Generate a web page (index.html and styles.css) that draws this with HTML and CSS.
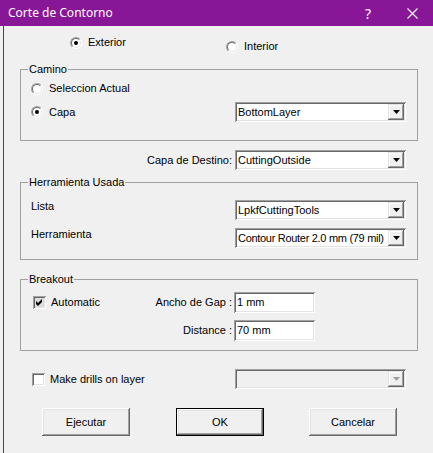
FILE: index.html
```html
<!DOCTYPE html>
<html>
<head>
<meta charset="utf-8">
<title>Corte de Contorno</title>
<link rel="stylesheet" href="styles.css">
</head>
<body>
<div class="window">
  <div class="titlebar">
    <span class="title">Corte de Contorno</span>
    <span class="tb-btn help">?</span>
    <span class="tb-btn close">
      <svg width="11" height="11" viewBox="0 0 11 11"><path d="M0.5 0.5 L10.5 10.5 M10.5 0.5 L0.5 10.5" stroke="#fff" stroke-width="1.1" fill="none"/></svg>
    </span>
  </div>
  <div class="client">
    <div class="mode-row">
      <div class="opt opt-ext"><span class="radio on"></span><span>Exterior</span></div>
      <div class="opt opt-int"><span class="radio"></span><span>Interior</span></div>
    </div>

    <fieldset class="group g-camino">
      <legend>Camino</legend>
      <div class="opt sel-row"><span class="radio"></span><span>Seleccion Actual</span></div>
      <div class="capa-row">
        <div class="opt"><span class="radio on"></span><span>Capa</span></div>
        <div class="combo push">
          <span class="combo-text">BottomLayer</span>
          <span class="combo-btn"><svg width="7" height="4" viewBox="0 0 7 4"><polygon points="0,0 7,0 3.5,4" fill="#000"/></svg></span>
        </div>
      </div>
    </fieldset>

    <div class="dest-row">
      <span>Capa de Destino:</span>
      <div class="combo">
        <span class="combo-text">CuttingOutside</span>
        <span class="combo-btn"><svg width="7" height="4" viewBox="0 0 7 4"><polygon points="0,0 7,0 3.5,4" fill="#000"/></svg></span>
      </div>
    </div>

    <fieldset class="group g-tool">
      <legend>Herramienta Usada</legend>
      <div class="tool-row first">
        <span class="tool-label">Lista</span>
        <div class="combo push">
          <span class="combo-text">LpkfCuttingTools</span>
          <span class="combo-btn"><svg width="7" height="4" viewBox="0 0 7 4"><polygon points="0,0 7,0 3.5,4" fill="#000"/></svg></span>
        </div>
      </div>
      <div class="tool-row second">
        <span class="tool-label">Herramienta</span>
        <div class="combo push">
          <span class="combo-text tight">Contour Router 2.0 mm (79 mil)</span>
          <span class="combo-btn"><svg width="7" height="4" viewBox="0 0 7 4"><polygon points="0,0 7,0 3.5,4" fill="#000"/></svg></span>
        </div>
      </div>
    </fieldset>

    <fieldset class="group g-break">
      <legend>Breakout</legend>
      <div class="break-grid">
        <div class="opt auto-opt">
          <span class="check gray"><svg width="7" height="7" viewBox="0 0 7 7"><polygon points="0,2 2,4 6,0 6,3 2,7 0,5" fill="#000"/></svg></span>
          <span>Automatic</span>
        </div>
        <span class="field-label">Ancho de Gap :</span>
        <div class="textbox">1 mm</div>
        <span></span>
        <span class="field-label">Distance :</span>
        <div class="textbox">70 mm</div>
      </div>
    </fieldset>

    <div class="drill-row">
      <div class="opt"><span class="check"></span><span>Make drills on layer</span></div>
      <div class="combo disabled push">
        <span class="combo-text"></span>
        <span class="combo-btn"><svg width="7" height="4" viewBox="0 0 7 4"><polygon points="0,0 7,0 3.5,4" fill="#a0a0a0"/></svg></span>
      </div>
    </div>

    <div class="button-row">
      <button class="btn">Ejecutar</button>
      <button class="btn default">OK</button>
      <button class="btn last">Cancelar</button>
    </div>
  </div>
</div>
</body>
</html>
```

FILE: styles.css
```css
html, body {
  margin: 0;
  padding: 0;
}
body {
  width: 433px;
  height: 453px;
  overflow: hidden;
  background: #f0f0f0;
  font-family: "Liberation Sans", Arial, sans-serif;
  font-size: 11px;
  line-height: 13px;
  color: #000;
}
.window {
  width: 433px;
  height: 453px;
}
.titlebar {
  height: 26px;
  background: #881798;
  color: #fff;
  display: flex;
  align-items: center;
}
.title {
  font-family: "Noto Sans", "Open Sans", sans-serif;
  font-size: 12px;
  line-height: 16px;
  padding-left: 8px;
  margin-top: -1px;
}
.tb-btn {
  display: flex;
  align-items: center;
  justify-content: center;
  height: 26px;
}
.help {
  margin-left: auto;
  width: 46px;
  font-family: "Noto Sans", sans-serif;
  font-size: 14px;
  margin-right: 0;
}
.close {
  width: 42px;
}
.client {
  height: 427px;
  box-sizing: border-box;
  margin-left: 3px;
  border-left: 1px solid #881798;
  overflow: hidden;
}
.opt {
  display: flex;
  align-items: center;
  gap: 6px;
  white-space: nowrap;
}
.radio {
  width: 12px;
  height: 12px;
  box-sizing: border-box;
  border-radius: 50%;
  border: 1px solid;
  border-color: #a0a0a0 #fff #fff #a0a0a0;
  background: #fff;
  display: grid;
  place-items: center;
  flex: none;
}
.radio::before {
  content: "";
  grid-area: 1 / 1;
  width: 10px;
  height: 10px;
  box-sizing: border-box;
  border-radius: 50%;
  border: 1px solid;
  border-color: #696969 #e3e3e3 #e3e3e3 #696969;
}
.radio.on::after {
  content: "";
  grid-area: 1 / 1;
  width: 4px;
  height: 4px;
  border-radius: 50%;
  background: #000;
}
.check {
  width: 13px;
  height: 13px;
  box-sizing: border-box;
  background: #fff;
  box-shadow: inset 1px 1px #a0a0a0, inset -1px -1px #fff, inset 2px 2px #696969, inset -2px -2px #e3e3e3;
  display: flex;
  align-items: center;
  justify-content: center;
  flex: none;
}
.check.gray {
  background: #dcdcdc;
}
.mode-row {
  display: flex;
  align-items: flex-start;
  padding-top: 10px;
  padding-left: 66px;
}
.opt-ext {
  width: 156px;
}
.opt-int {
  margin-top: 4px;
}
.group {
  margin: 0 15px 0 16px;
  padding: 0 0 0 10px;
  border: 1px solid #a0a0a0;
  min-width: 0;
}
.group legend {
  margin-left: -3px;
  padding: 0 1px;
  font-size: 11px;
  line-height: 13px;
}
.g-camino {
  margin-top: 10px;
  padding-top: 6px;
  padding-bottom: 18px;
}
.capa-row {
  display: flex;
  align-items: center;
  margin-top: 7px;
}
.push {
  margin-left: auto;
  margin-right: 11px;
}
.combo {
  width: 171px;
  height: 20px;
  box-sizing: border-box;
  padding: 2px;
  display: flex;
  background: #fff;
  box-shadow: inset 1px 1px #a0a0a0, inset -1px -1px #fff, inset 2px 2px #696969, inset -2px -2px #e3e3e3;
  flex: none;
}
.combo.disabled {
  background: #f0f0f0;
}
.combo-text {
  flex: 1;
  min-width: 0;
  padding-left: 1px;
  line-height: 16px;
  white-space: nowrap;
  overflow: hidden;
}
.combo-text.tight {
  letter-spacing: -0.3px;
}
.combo-btn {
  width: 16px;
  height: 16px;
  box-sizing: border-box;
  background: #f0f0f0;
  box-shadow: inset -1px -1px #696969, inset 1px 1px #e3e3e3, inset -2px -2px #a0a0a0, inset 2px 2px #fff;
  display: flex;
  align-items: center;
  justify-content: center;
  flex: none;
}
.combo-btn svg {
  display: block;
}
.dest-row {
  display: flex;
  justify-content: flex-end;
  align-items: center;
  gap: 3px;
  margin: 9px 27px 0 0;
}
.g-tool {
  margin-top: 6px;
  padding-bottom: 11px;
}
.tool-row {
  display: flex;
  align-items: flex-start;
}
.tool-row.first {
  margin-top: 11px;
}
.tool-row.second {
  margin-top: 8px;
}
.tool-label {
  margin-top: 0;
}
.g-break {
  margin-top: 13px;
  padding-bottom: 9px;
}
.break-grid {
  display: grid;
  grid-template-columns: 1fr auto 81px;
  column-gap: 2px;
  row-gap: 7px;
  align-items: center;
  margin-top: 6px;
  padding-right: 102px;
}
.auto-opt {
  gap: 5px;
  margin-left: 2px;
}
.field-label {
  text-align: right;
  white-space: nowrap;
}
.textbox {
  height: 21px;
  box-sizing: border-box;
  padding: 2px 2px 2px 3px;
  line-height: 17px;
  background: #fff;
  box-shadow: inset 1px 1px #a0a0a0, inset -1px -1px #fff, inset 2px 2px #696969, inset -2px -2px #e3e3e3;
}
.drill-row {
  display: flex;
  align-items: center;
  margin-top: 18px;
  padding-left: 28px;
}
.drill-row .opt {
  gap: 5px;
}
.drill-row .push {
  margin-right: 27px;
}
.button-row {
  display: flex;
  margin-top: 19px;
  padding-left: 38px;
}
.btn {
  width: 88px;
  height: 28px;
  box-sizing: border-box;
  border: none;
  padding: 0;
  margin: 0;
  background: #f0f0f0;
  font-family: "Liberation Sans", Arial, sans-serif;
  font-size: 11px;
  color: #000;
  box-shadow: inset -1px -1px #696969, inset 1px 1px #fff, inset -2px -2px #a0a0a0, inset 2px 2px #e3e3e3;
}
.btn.default {
  margin-left: 46px;
  box-shadow: inset 0 0 0 1px #000, inset -2px -2px #696969, inset 2px 2px #fff, inset -3px -3px #a0a0a0, inset 3px 3px #e3e3e3;
}
.btn.last {
  margin-left: 45px;
}
```
